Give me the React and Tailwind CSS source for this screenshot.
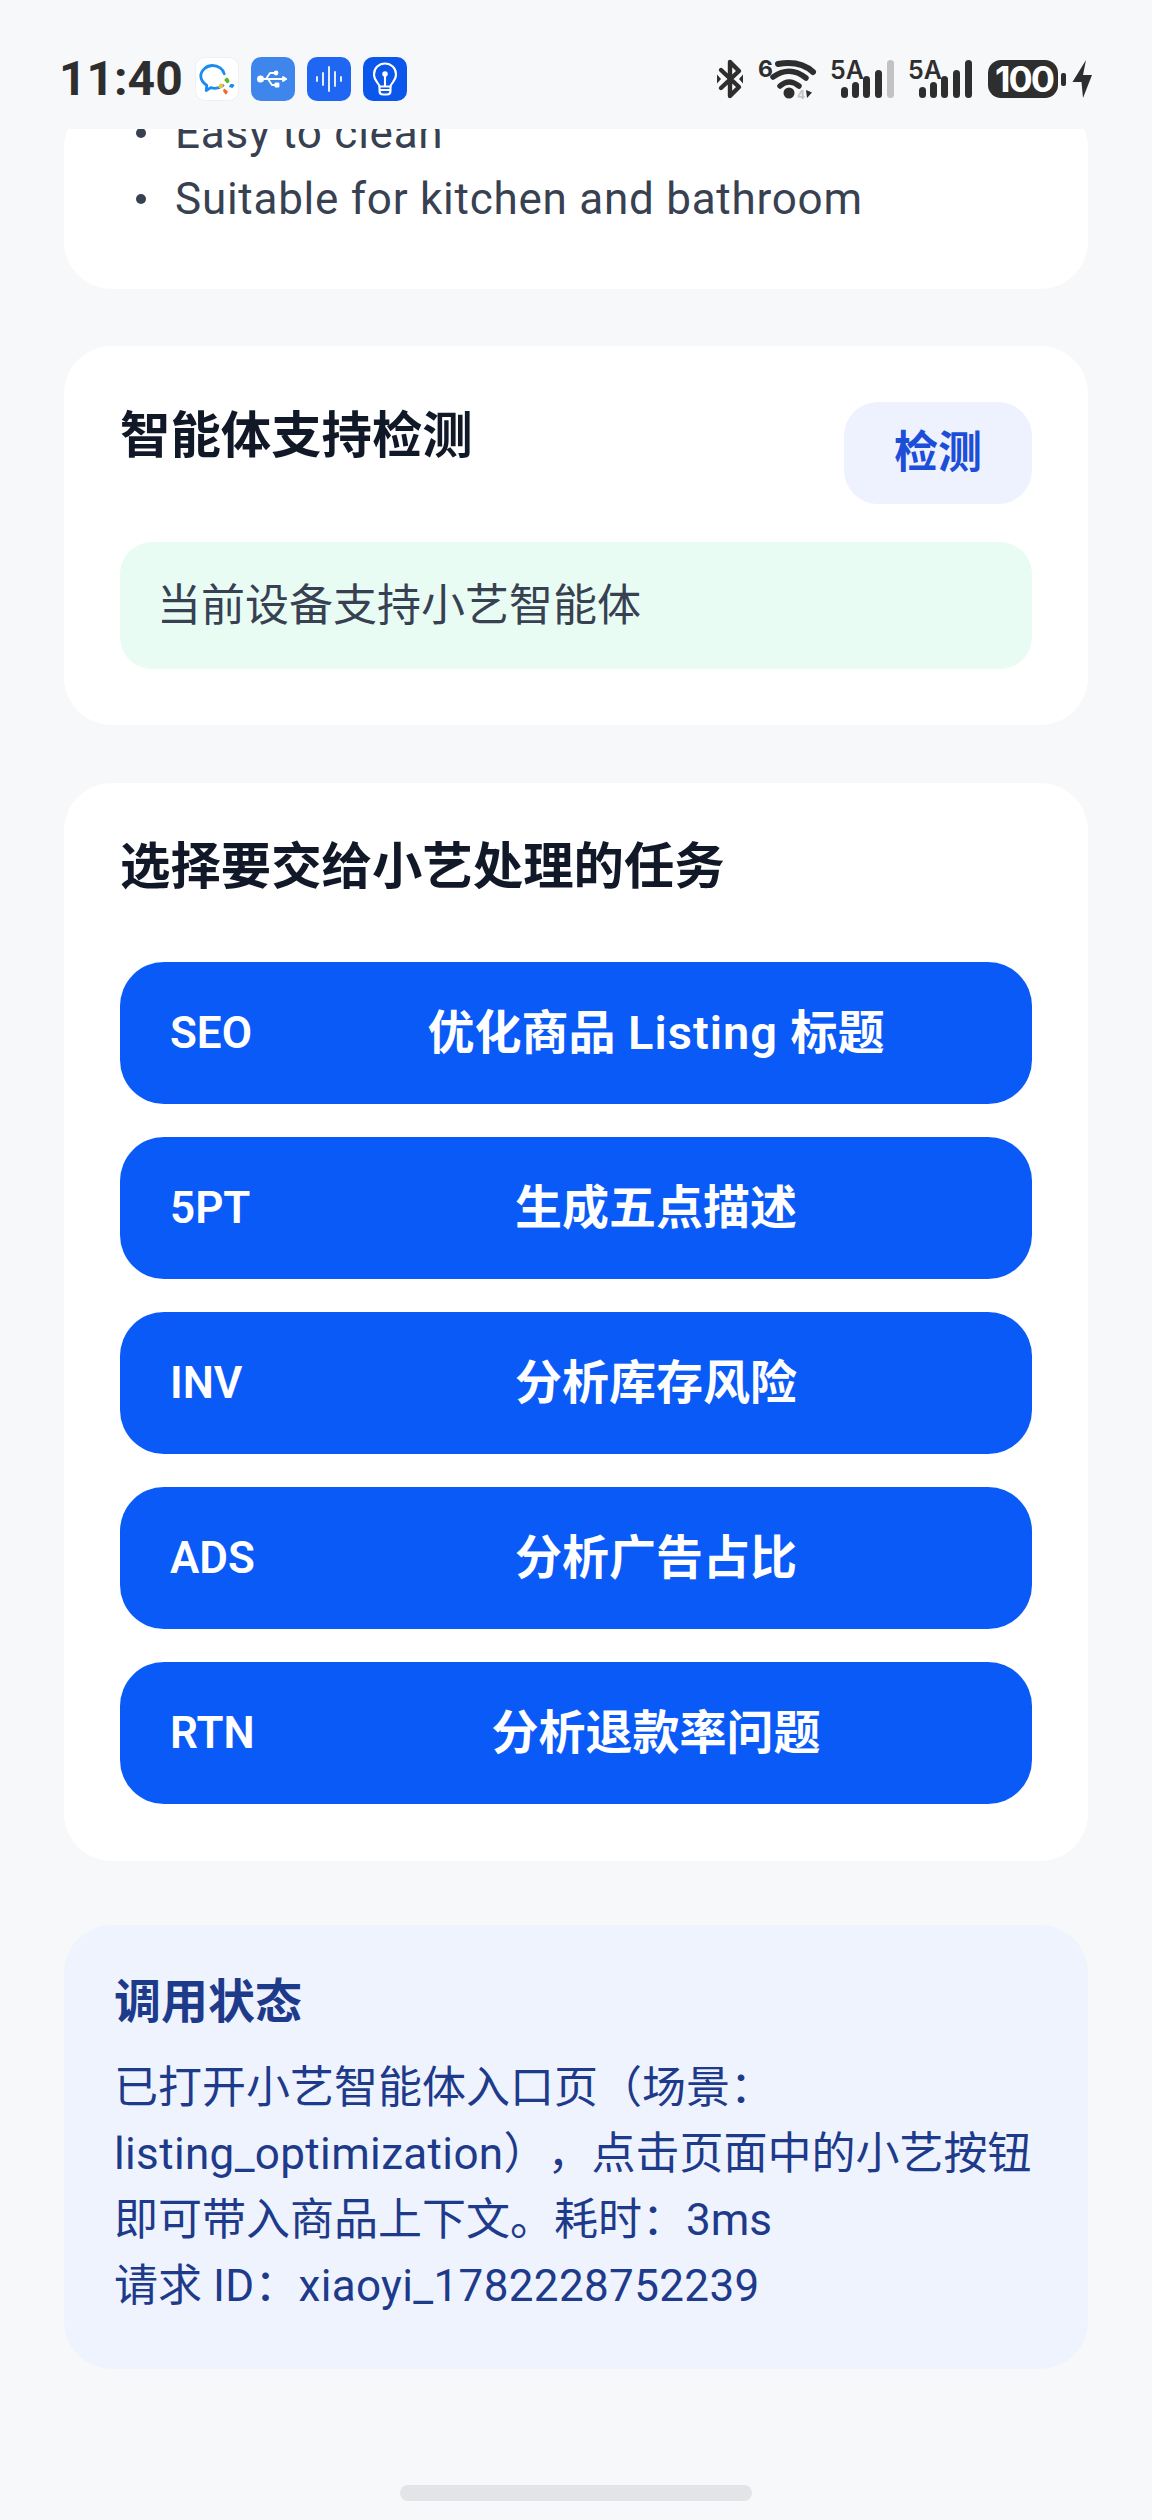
import React from 'react';

const tasks = [
  { code: 'SEO', label: <>优化商品<span className="tracking-[1px]"> Listing </span>标题</> },
  { code: '5PT', label: '生成五点描述' },
  { code: 'INV', label: '分析库存风险' },
  { code: 'ADS', label: '分析广告占比' },
  { code: 'RTN', label: '分析退款率问题' },
];

const font = { fontFamily: 'Roboto, "Noto Sans CJK SC", sans-serif' };

function WeComIcon() {
  return (
    <div className="w-[44px] h-[44px] rounded-[10px] bg-white border border-[#eef0f2] flex items-center justify-center">
      <svg width="42" height="42" viewBox="0 0 42 42" fill="none">
        <path d="M27 27.500c-2 1.600-5 2.800-8 2.800-1.500 0-3-.3-4.200-.7l-4.600 2.900.6-5C7.300 25 4.800 21.800 4.800 18 4.800 12 11 7.500 16.500 7.500c5.800 0 10.600 3.500 11.700 8.300" stroke="#1a8cf0" strokeWidth="2.800" strokeLinecap="round" strokeLinejoin="round" />
        <path d="M30.500 19.500c1.800.4 2.800 2 3 4.500l-2.500 1.500-2.800-3.500z" fill="#5cb531" />
        <path d="M23 30c-1-2 0-3.500 1.800-4.800l3 1.300-1.500 3.500z" fill="#f7c12e" />
        <path d="M28 30.500l3.500 2.500c.5 1.800-.5 3-2 3.500l-2.500-3.500z" fill="#ef6a25" />
        <path d="M33 29l1-2.500c1.800-.8 3.500-.5 4.500 1l-2 2.500z" fill="#1a8cf0" />
      </svg>
    </div>
  );
}

function UsbIcon() {
  return (
    <div className="w-[44px] h-[44px] rounded-[10px] bg-[#3f86ec] flex items-center justify-center">
      <svg width="34" height="24" viewBox="0 0 34 24" fill="none" stroke="#fff" strokeWidth="1.800" strokeLinecap="round" strokeLinejoin="round">
        <circle cx="4.500" cy="12" r="2.600" fill="#fff" />
        <path d="M5 12h25" />
        <path d="M30 12l-3-2v4z" fill="#fff" />
        <path d="M10 12l4-6h5" />
        <path d="M12 12l4 6h4" />
        <circle cx="20" cy="6" r="1.500" fill="#fff" />
        <rect x="19.500" y="16.500" width="3" height="3" fill="#fff" />
      </svg>
    </div>
  );
}

function VoiceIcon() {
  return (
    <div className="w-[44px] h-[44px] rounded-[10px] bg-[#1f67f2] flex items-center justify-center">
      <svg width="28" height="26" viewBox="0 0 28 26" fill="none" stroke="#fff" strokeWidth="1.900" strokeLinecap="round" opacity="0.92">
        <path d="M2 11v4M8 7v12M14 1v24M20 6v14M26 11v4" />
      </svg>
    </div>
  );
}

function BulbIcon() {
  return (
    <div className="w-[44px] h-[44px] rounded-[10px] bg-[#0b57eb] flex items-center justify-center">
      <svg width="26" height="34" viewBox="0 0 26 34" fill="none" stroke="#fff" strokeWidth="2.100" strokeLinecap="round" strokeLinejoin="round">
        <path d="M7.500 24.500C7.500 21.500 2 19 2 12.500 2 6 7 1.500 13 1.500S24 6 24 12.500c0 6.500-5.500 9-5.500 12z" />
        <path d="M13 24V13" />
        <circle cx="13" cy="12" r="1.700" fill="#fff" />
        <path d="M7.500 24.500v4.500c0 2 1.500 3.500 3.500 3.500h4c2 0 3.500-1.500 3.500-3.500v-4.500M7.500 28h11" />
      </svg>
    </div>
  );
}

function StatusRight() {
  const dark = '#2e2e2e';
  const bars = [
    [841, 87, 11],
    [852, 82, 16],
    [863, 76, 22],
    [875, 70, 28],
  ];
  return (
    <svg width="380" height="56" viewBox="715 51 380 56" fill="none">
      {/* bluetooth */}
      <path d="M730 62v34l9-9-18-17M730 62l9 9-18 17" stroke={dark} strokeWidth="4.400" strokeLinecap="round" strokeLinejoin="round" />
      <path d="M717 74.500l4 4.500-4 4.500zM743 74.500l-4 4.500 4 4.500z" fill={dark} />
      {/* wifi */}
      <text x="758" y="77" fontSize="23" fontWeight="700" fill={dark} fontFamily="Inter, sans-serif">6</text>
      <path d="M778 64Q800 60 813 72" stroke={dark} strokeWidth="6" strokeLinecap="round" />
      <path d="M773 77Q790 65 806 78" stroke={dark} strokeWidth="5.500" strokeLinecap="round" />
      <path d="M780 86Q789 78 799 86" stroke={dark} strokeWidth="5.500" strokeLinecap="round" />
      <circle cx="789" cy="93" r="5.500" fill={dark} />
      <text x="797" y="99" fontSize="12" fontWeight="700" fill="#c4c4c4" fontFamily="Inter, sans-serif">4</text>
      <path d="M806 90l1 8 5-5.500z" fill={dark} />
      {/* signal 1 */}
      <text x="830" y="79" fontSize="25" fontWeight="600" fill={dark} fontFamily="Inter, sans-serif">5A</text>
      {bars.map(([x, y, h]) => (
        <rect key={x} x={x} y={y} width="7" height={h} rx="3.500" fill={dark} />
      ))}
      <rect x="887" y="60" width="7" height="38" rx="3.500" fill="#c2c2c2" />
      {/* signal 2 */}
      <text x="908" y="79" fontSize="25" fontWeight="600" fill={dark} fontFamily="Inter, sans-serif">5A</text>
      {bars.map(([x, y, h]) => (
        <rect key={x} x={x + 78} y={y} width="7" height={h} rx="3.500" fill={dark} />
      ))}
      <rect x="965" y="60" width="7" height="38" rx="3.500" fill={dark} />
      {/* battery */}
      <rect x="988" y="60" width="70" height="38" rx="13" fill={dark} />
      <text x="1024" y="92" fontSize="36" fontWeight="700" fill="#fff" textAnchor="middle" fontFamily="Inter, sans-serif" letterSpacing="-2">100</text>
      <rect x="1061" y="73" width="5" height="13" rx="2" fill={dark} />
      {/* charging */}
      <path d="M1086 60L1072.500 82H1081.500L1083 98L1092 75H1083z" fill={dark} />
    </svg>
  );
}

function Card({ children }) {
  return <div className="bg-white rounded-[48px] px-[56px]">{children}</div>;
}

export default function App() {
  return (
    <div className="w-[1152px] h-[2520px] bg-[#f7f8fa] overflow-hidden flex flex-col" style={font}>
      {/* status bar */}
      <div className="h-[129px] shrink-0 pl-[59px] pr-[57px] pt-[51px] flex items-start justify-between">
        <div className="flex items-center mt-[6px]">
          <span className="text-[#2e2e2e] text-[48px] leading-[44px] font-bold w-[136px]">11:40</span>
          <div className="flex gap-[12px]">
            <WeComIcon />
            <UsbIcon />
            <VoiceIcon />
            <BulbIcon />
          </div>
        </div>
        <StatusRight />
      </div>

      {/* scrolled content, first card is cut by the status bar */}
      <div className="px-[64px] flex flex-col">
        <div className="h-[160px] overflow-hidden flex flex-col justify-end">
          <div className="bg-white rounded-[48px] pl-[72px] pb-[57px] shrink-0">
            <ul className="text-[44px] leading-[66px] text-[#374151] tracking-[0.75px]">
              {['Easy to clean', 'Suitable for kitchen and bathroom'].map((t) => (
                <li key={t} className="flex items-center gap-[29px]">
                  <span className="w-[10px] h-[10px] rounded-full bg-[#374151]" />
                  <span>{t}</span>
                </li>
              ))}
            </ul>
          </div>
        </div>

        <div className="mt-[57px]">
          <Card>
            <div className="pt-[56px] pb-[56px]">
              <div className="flex justify-between items-start">
                <h2 className="text-[50.4px] leading-[70px] font-bold text-[#111827] -mt-[1px]">智能体支持检测</h2>
                <button className="w-[188px] h-[102px] rounded-[34px] bg-[#edf2fe] text-[#1d4ed8] text-[44px] font-semibold">检测</button>
              </div>
              <div className="mt-[38px] h-[127px] rounded-[32px] bg-[#e9fcf3] pl-[37px] flex items-center text-[44px] text-[#374151]">
                当前设备支持小艺智能体
              </div>
            </div>
          </Card>
        </div>

        <div className="mt-[58px]">
          <Card>
            <div className="pt-[49px] pb-[57px]">
              <h2 className="text-[50.4px] leading-[70px] font-bold text-[#111827]">选择要交给小艺处理的任务</h2>
              <div className="mt-[60px] flex flex-col gap-[33px]">
                {tasks.map((t) => (
                  <button key={t.code} className="h-[142px] rounded-[44px] bg-[#0a5af7] text-white flex items-center px-[50px]">
                    <span className="w-[160px] text-left text-[44px] font-semibold">{t.code}</span>
                    <span className="flex-1 text-center text-[47px] font-semibold">{t.label}</span>
                  </button>
                ))}
              </div>
            </div>
          </Card>
        </div>

        <div className="mt-[64px] bg-[#eef3fe] rounded-[48px] px-[50px] pt-[44px] pb-[50px] h-[444px] text-[#1e3a8a]">
          <h3 className="text-[47px] leading-[66px] font-bold">调用状态</h3>
          <p className="mt-[20px] text-[44px] leading-[66px] [text-spacing-trim:space-all]">
            已打开小艺智能体入口页（场景：<br />
            <span className="tracking-[0.35px]">listing_optimization</span>），点击页面中的小艺按钮<br />
            即可带入商品上下文。耗时：3ms<br />
            请求 <span className="tracking-[0.35px]">ID</span>：<span className="tracking-[0.35px]">xiaoyi_1782228752239</span>
          </p>
        </div>
      </div>

      {/* home indicator */}
      <div className="mt-[116px] flex justify-center">
        <div className="w-[352px] h-[16px] rounded-full bg-[#e3e4e8]" />
      </div>
    </div>
  );
}
